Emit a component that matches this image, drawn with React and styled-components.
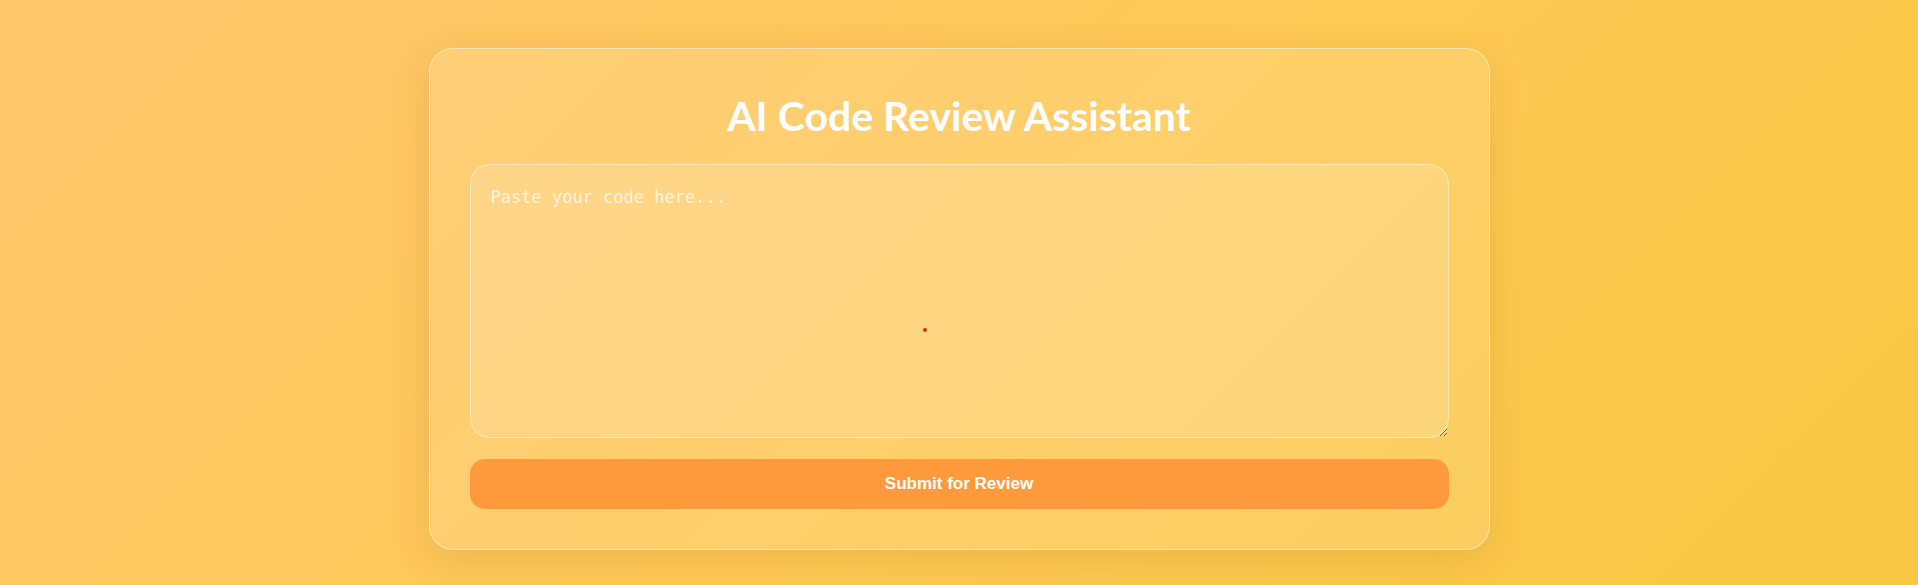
import React, { useState } from "react";
import styled, { createGlobalStyle } from "styled-components";

const GlobalStyle = createGlobalStyle`
  html, body {
    margin: 0;
    padding: 0;
    height: 100%;
  }
  body {
    font-family: "Liberation Sans", Arial, sans-serif;
    background: linear-gradient(135deg, #ffc56c 0%, #fec955 55%, #f9c743 100%);
    min-height: 585px;
    overflow: hidden;
  }
`;

const Page = styled.div`
  display: flex;
  justify-content: center;
  align-items: flex-start;
  padding-top: 48px;
  min-height: 585px;
  box-sizing: border-box;
`;

const Card = styled.div`
  width: 1061px;
  box-sizing: border-box;
  padding: 40px;
  border-radius: 24px;
  background: rgba(255, 255, 255, 0.12);
  border: 1px solid rgba(255, 255, 255, 0.45);
  box-shadow: 0 10px 36px rgba(150, 90, 0, 0.16);
  display: flex;
  flex-direction: column;
`;

const Title = styled.h1`
  margin: 3px 0 24px;
  text-align: center;
  font-family: "Lato", "Noto Sans", sans-serif;
  font-weight: 700;
  font-size: 41px;
  line-height: 48px;
  color: #ffffff;
`;

const CodeInput = styled.textarea`
  display: block;
  width: 100%;
  height: 274px;
  box-sizing: border-box;
  padding: 21px 20px;
  border-radius: 20px;
  border: 1px solid rgba(255, 255, 255, 0.45);
  background: rgba(255, 255, 255, 0.15);
  font-family: "DejaVu Sans Mono", "Liberation Mono", monospace;
  font-size: 17px;
  line-height: 1.4;
  color: #6b4a10;
  outline: none;
  resize: vertical;

  &::placeholder {
    color: rgba(255, 255, 255, 0.75);
  }
`;

const SubmitButton = styled.button`
  margin-top: 21px;
  height: 50px;
  width: 100%;
  border: none;
  border-radius: 15px;
  background: #ff9a3c;
  color: #ffffff;
  font-family: "Liberation Sans", Arial, sans-serif;
  font-weight: 700;
  font-size: 17px;
  cursor: pointer;
`;

const CursorDot = styled.div`
  position: fixed;
  left: 923px;
  top: 328px;
  width: 4px;
  height: 4px;
  border-radius: 50%;
  background: #e8261e;
  pointer-events: none;
`;

export default function App() {
  const [code, setCode] = useState("");

  return (
    <>
      <GlobalStyle />
      <Page>
        <Card>
          <Title>AI Code Review Assistant</Title>
          <CodeInput
            placeholder="Paste your code here..."
            value={code}
            onChange={(e) => setCode(e.target.value)}
          />
          <SubmitButton>Submit for Review</SubmitButton>
        </Card>
      </Page>
      <CursorDot />
    </>
  );
}
